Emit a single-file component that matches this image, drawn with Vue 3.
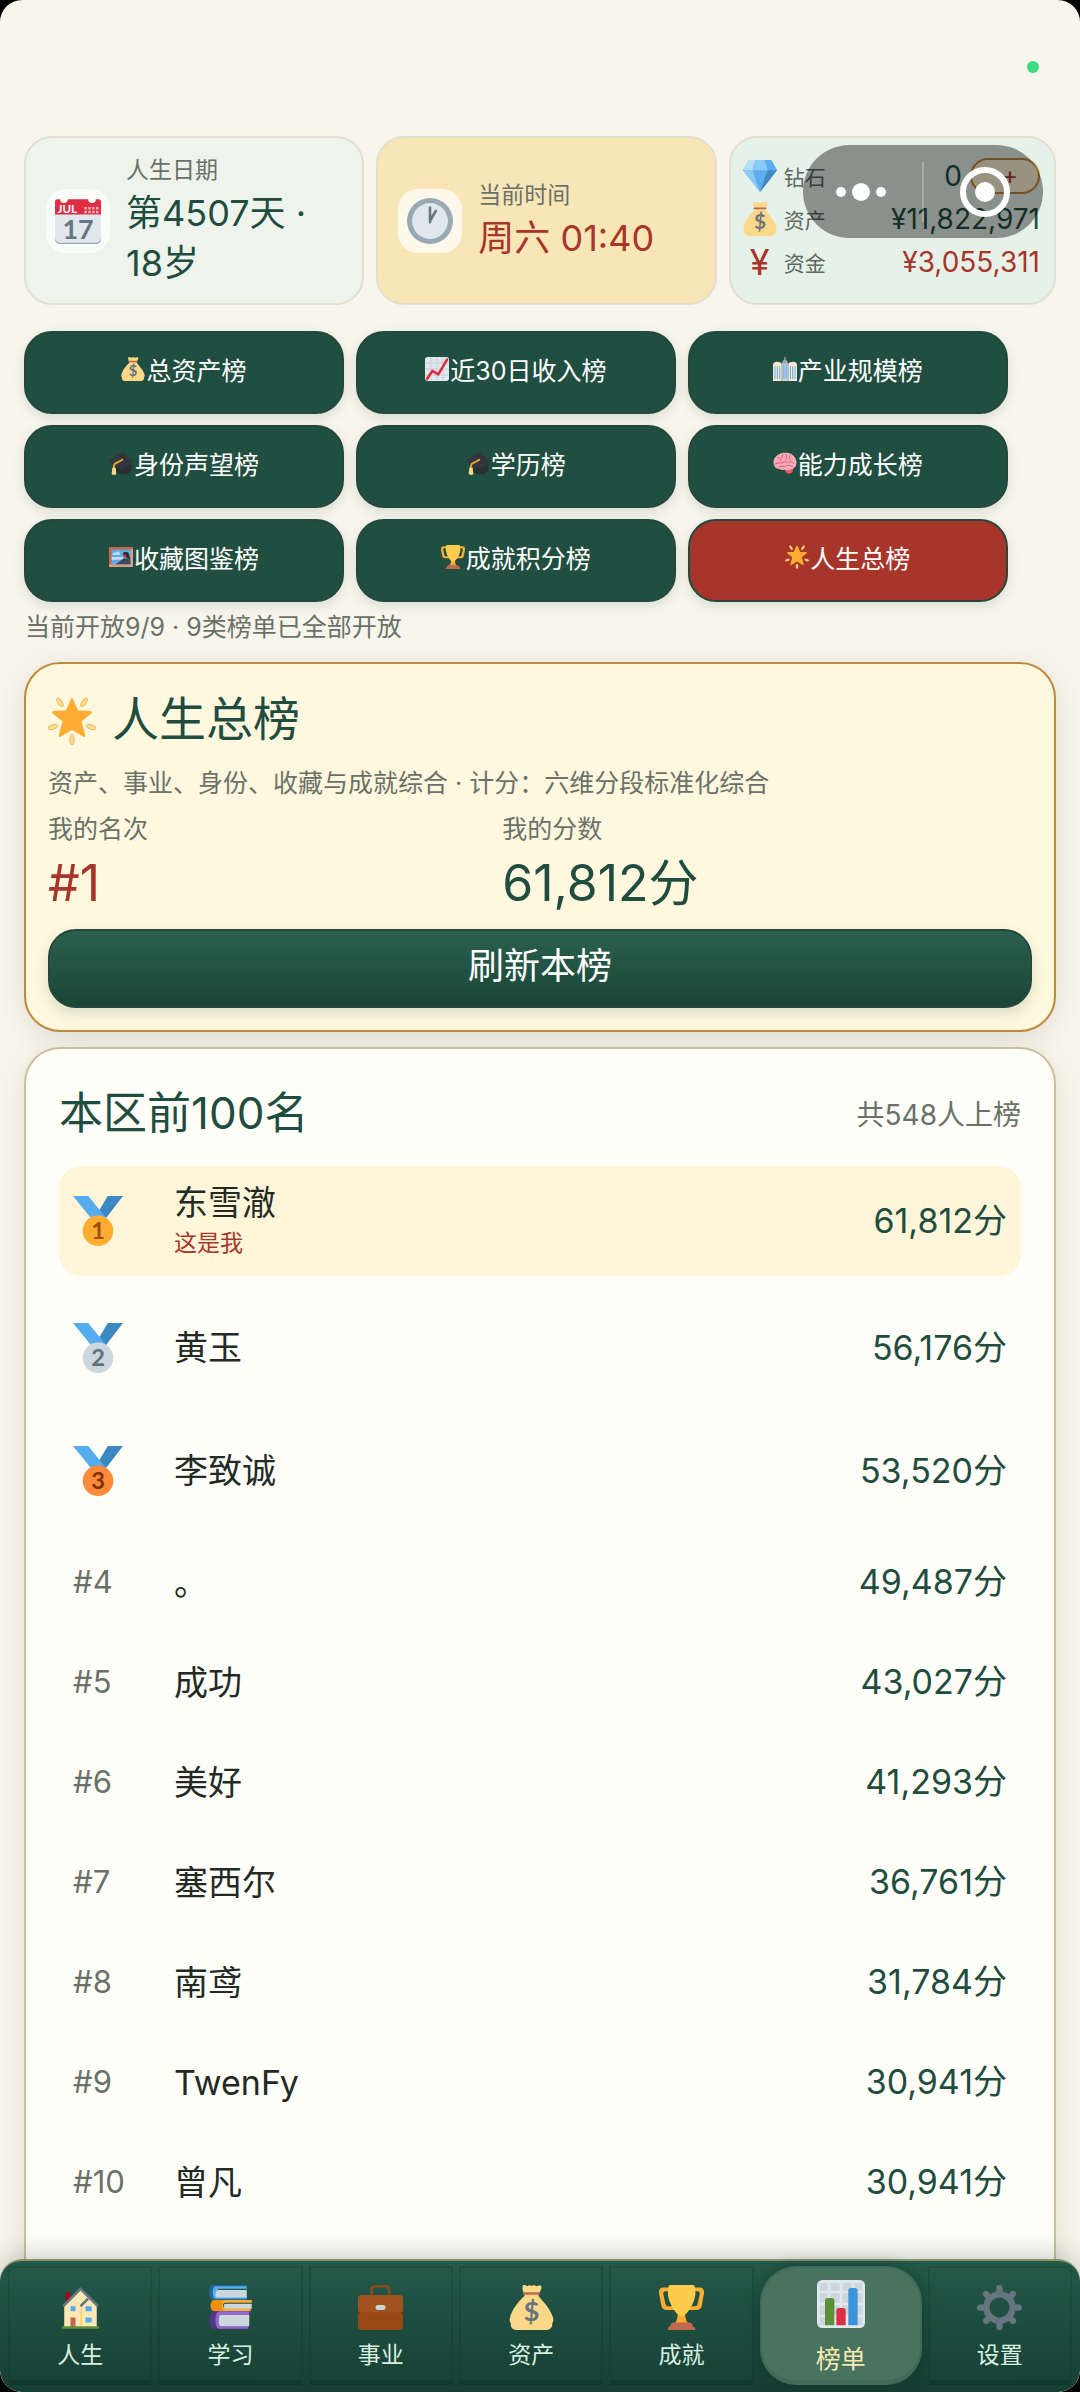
<script setup>
import { ref, computed } from 'vue'

const boards = [
  { name: '总资产榜', icon: 'bag' },
  { name: '近30日收入榜', icon: 'trend' },
  { name: '产业规模榜', icon: 'building' },
  { name: '身份声望榜', icon: 'cap' },
  { name: '学历榜', icon: 'cap' },
  { name: '能力成长榜', icon: 'brain' },
  { name: '收藏图鉴榜', icon: 'picture' },
  { name: '成就积分榜', icon: 'trophy' },
  { name: '人生总榜', icon: 'star' },
]

const players = [
  { name: '东雪澈', score: 61812, me: true },
  { name: '黄玉', score: 56176 },
  { name: '李致诚', score: 53520 },
  { name: '。', score: 49487 },
  { name: '成功', score: 43027 },
  { name: '美好', score: 41293 },
  { name: '塞西尔', score: 36761 },
  { name: '南鸢', score: 31784 },
  { name: 'TwenFy', score: 30941 },
  { name: '曾凡', score: 30941 },
]

const tabs = [
  { name: '人生', icon: 'house' },
  { name: '学习', icon: 'books' },
  { name: '事业', icon: 'briefcase' },
  { name: '资产', icon: 'bag' },
  { name: '成就', icon: 'trophy' },
  { name: '榜单', icon: 'bars' },
  { name: '设置', icon: 'gear' },
]

// gold, silver, bronze
const medals = [
  { fill: '#ffac33', text: '#9e5200' },
  { fill: '#ccd6dd', text: '#627077' },
  { fill: '#ff8a3b', text: '#7c3300' },
]

const activeBoard = ref('人生总榜')
const activeTab = ref('榜单')

const myIndex = computed(() => players.findIndex((p) => p.me))
const myScore = computed(() => players[myIndex.value].score)

function fmt(n) {
  return n.toLocaleString('en-US')
}
</script>

<template>
  <div class="page">
    <!-- shared icon shapes -->
    <svg class="defs" aria-hidden="true">
      <symbol id="i-gem" viewBox="0 0 36 36">
        <path fill="#5dadec" d="M0 12 6 1h24l6 11-18 23z" />
        <path fill="#bdddf4" d="M0 12 6 1h7l-3 11z" />
        <path fill="#8ccaf7" d="M13 1h10l3 11H10z" />
        <path fill="#5dadec" d="M23 1h7l6 11H26z" />
        <path fill="#4289c1" d="M26 12h10L18 35z" />
        <path fill="#8ccaf7" d="M0 12h10l8 23z" />
      </symbol>
      <symbol id="i-bag" viewBox="0 0 36 36">
        <path fill="#fdd888" d="M11 1c0-2 2-1 3.500 0C16 0 17 0 18 .700 19.500 0 20.500 0 22 1c1.500-1 4-1 4 .500 0 2-1 3.500-2 5l-.500 2c2 3 9 9 11.500 17 .500 1.500 1 3-.500 5.500.500 3-2 5-5 5H6c-3 0-5-2-4.500-5C0 28.500.500 27 1 25.500c0-1.500.500-2 1-3C4 17 9.500 11.500 12.500 8.500l-.500-2C11 5 10.500 3 11 1z" />
        <path d="M12 6.700h12" stroke="#bf6952" stroke-width="2" stroke-linecap="round" />
      </symbol>
      <symbol id="i-trend" viewBox="0 0 36 36">
        <rect width="36" height="36" rx="4" fill="#e1e8ed" />
        <path d="M9 1v34M18 1v34M27 1v34M1 9h34M1 18h34M1 27h34" stroke="#ccd6dd" stroke-width="2" />
        <path d="m3 33 8-12 9 5L33 4" fill="none" stroke="#dd2e44" stroke-width="4" stroke-linecap="round" stroke-linejoin="round" />
      </symbol>
      <symbol id="i-building" viewBox="0 0 36 36">
        <path fill="#99aab5" d="M16 4h1V0h2v4h1l3 5v27H13V9z" />
        <path fill="#ccd6dd" d="M14 10h8v26h-8z" />
        <path fill="#ffe8cf" d="M0 12c0-4 3-5 6-5s6 1 7 3v26H0zM36 12c0-4-3-5-6-5s-6 1-7 3v26h13z" />
        <path d="M3 14v19M6.500 14v19M10 14v19M26 14v19M29.500 14v19M33 14v19" stroke="#55acee" stroke-width="1.500" />
        <path d="M15.500 11v22M18 11v22M20.500 11v22" stroke="#55acee" stroke-width="1.200" />
      </symbol>
      <symbol id="i-cap" viewBox="0 0 36 36">
        <path fill="#292f33" d="M10 16c8-3 18-3 23 2 2 6 1 12-3 15-6 4-13 2-19-1z" />
        <path fill="#31373d" d="M18 2c1-1 2-1 3 0l14 13c1 1 1 2-1 3L21 27c-2 1-3 1-5 0L1 17c-1-1-1-2 0-3z" />
        <path d="M20 13 9 19c-2 2-2 6-2 9" fill="none" stroke="#ffac33" stroke-width="2.500" stroke-linecap="round" />
        <path fill="#ffd983" d="M5 25h5l1 10-3 1-4-1z" />
      </symbol>
      <symbol id="i-brain" viewBox="0 0 36 36">
        <path fill="#ea596e" d="M18 28c5-2 12-3 12-3s1 8-5 9c-4 0-7-2-7-6z" />
        <path fill="#f4abba" d="M1 19C0 13 3 9 7 6c5-4 11-4 16-3 6 1 11 6 12 12 1 5-1 9-4 11-5 3-9 3-14 2-3 1-5 1-7-1-5 0-8-3-9-8z" />
        <path d="M7 10c3 0 5 2 5 4M14 5c1 3 0 5-2 6M20 5c0 3 1 5-1 8M26 7c-2 2-2 4 1 7M4 19c4-3 8 1 11-2 4-3 6 1 9 0s5-1 7 2M9 24c4-3 7 1 11-2 3-1 6 0 9 1" fill="none" stroke="#ea596e" stroke-width="1.500" stroke-linecap="round" />
      </symbol>
      <symbol id="i-picture" viewBox="0 0 36 36">
        <path fill="#c1694f" d="M0 3h36v30H0z" />
        <path fill="#d99e82" d="M0 29h32V6h4v27H0z" />
        <path fill="#5dadec" d="M4 7h28v22H4z" />
        <path fill="#bdddf4" d="M4 18h18v4H4zM5 15c1-4 4-3 5-4 3-3 7 0 7 4z" />
        <path fill="#3b4a58" d="m10 29 12-9 10 1v8z" />
        <circle cx="25" cy="15" r="4" fill="#dd2e44" />
        <path fill="#292f33" d="M21 14c0-5 8-5 9 0l2 7-6-1c2-3 0-5-5-6z" />
      </symbol>
      <symbol id="i-trophy" viewBox="0 0 36 36">
        <path fill="#ffac33" d="M5.123 5h6C12.227 5 13 4.896 13 6V4c0-1.104-.773-2-1.877-2h-8c-2 0-3.583 2.125-3 5 0 0 1.791 9.375 1.917 9.958C2.373 18.500 4.164 20 6.081 20h6.958c1.105 0-.039-1.896-.039-3v-2c0 1.104-.773 2-1.877 2h-4c-1.104 0-1.833-1.042-2-2S3.539 7.667 3.539 7.667C3.206 5.750 4.018 5 5.123 5zm25.812 0h-6C23.831 5 22 4.896 22 6V4c0-1.104 1.831-2 2.935-2h8c2 0 3.584 2.125 3 5 0 0-1.633 9.419-1.771 10-.354 1.500-2.042 3-4 3h-7.146C21.914 20 22 18.104 22 17v-2c0 1.104 1.831 2 2.935 2h4c1.104 0 1.834-1.042 2-2s1.584-7.333 1.584-7.333C32.851 5.750 32.040 5 30.935 5z" />
        <path fill="#ffac33" d="M20.832 22c0-6.958-2.709 0-2.709 0s-3-6.958-3 0-3.291 10-3.291 10h12.292s-3.292-3.042-3.292-10z" />
        <path fill="#ffcc4d" d="M29.123 6.577c0 6.775-6.770 18.423-11 18.423-4.231 0-11-11.649-11-18.423C7.123 1 8.123 0 9.123 0h18c1.042 0 2 1 2 6.577z" />
        <path fill="#c1694f" d="M27 33c0-1.500-1-3-3-3H12c-2 0-3 1.500-3 3-1 0-2 1-2 3h22c0-2-1-3-2-3z" />
      </symbol>
      <symbol id="i-star" viewBox="0 0 36 36">
        <path fill="#ffac33" stroke="#ffac33" stroke-width="2" stroke-linejoin="round" d="m18 2 4 9 10 .500-8 6.500 3 11-9-5.500L9 29l3-11-8-6.500L14 11z" />
        <g fill="#ffd983" stroke="#dfa95f" stroke-width=".500">
          <ellipse cx="9" cy="4" rx="1.700" ry="3.700" transform="rotate(-33 9 4)" />
          <ellipse cx="27" cy="4" rx="1.700" ry="3.700" transform="rotate(33 27 4)" />
          <ellipse cx="3.700" cy="22.500" rx="3.700" ry="1.700" transform="rotate(-17 3.700 22.500)" />
          <ellipse cx="32.300" cy="22.500" rx="3.700" ry="1.700" transform="rotate(17 32.300 22.500)" />
          <ellipse cx="18" cy="32" rx="1.700" ry="3.800" />
        </g>
      </symbol>
      <symbol id="i-house" viewBox="0 0 36 36">
        <path fill="#a0041e" d="M6 6h4v7H6z" />
        <path fill="#ffe8b6" d="M18 4 5 17v17h26V17z" />
        <path fill="#ffcc4d" d="M18 19h1v15h-1z" />
        <path d="m4 17 14-14 14 14M24 11l-6 6" fill="none" stroke="#66757f" stroke-width="2" />
        <path fill="#55acee" d="M10 17h4v4h-4zM22 17h5v4h-5zM22 26h5v4h-5z" />
        <path fill="#c1694f" d="M10 26h4v8h-4z" />
        <path fill="#5c913b" d="M3 33h30v2H3z" />
      </symbol>
      <symbol id="i-books" viewBox="0 0 36 36">
        <path fill="#226699" d="M4 0h27v2H6v8h25v2H4c-4 0-4-12 0-12z" />
        <path fill="#55acee" d="M6 1h25v2H8v6h23v2H6c-3 0-3-10 0-10z" />
        <path fill="#ccd6dd" d="M8 4h23v6H7c-2 0-1-6 1-6z" />
        <path fill="#f4900c" d="M5 12h30v2H12v4h22v3H5c-4 0-4-9 0-9z" />
        <path fill="#ffac33" d="M14 12h21v2H14c-3 1-3 4 0 5h20v2H14c-4 0-4-9 0-9z" />
        <path fill="#ccd6dd" d="M14 15h21v4H14c-2 0-2-4 0-4z" />
        <path fill="#553788" d="M5 21h28v3H9v9h24v2H5c-5 0-5-14 0-14z" />
        <path fill="#9266cc" d="M9 21h24v3H10c-2 1-2 8 0 9h22v2H9c-4 0-4-14 0-14z" />
        <path fill="#ccd6dd" d="M10 24h23v9H10c-2 0-2-9 0-9z" />
      </symbol>
      <symbol id="i-briefcase" viewBox="0 0 36 36">
        <path d="M11 9V4c0-2 1-3 3-3h8c2 0 3 1 3 3v5" fill="none" stroke="#8a4b20" stroke-width="2" />
        <rect y="8" width="36" height="28" rx="3" fill="#974914" />
        <path fill="#662113" d="M0 19c0 4 1 4 4 4h28c3 0 4 0 4-4v4H0z" />
        <path fill="#a0521f" d="M3 8h30a3 3 0 0 1 3 3v7c0 3-1 4-4 4H4c-3 0-4-1-4-4v-7a3 3 0 0 1 3-3z" />
        <rect x="14" y="16" width="8" height="4" rx="2" fill="#ccd6dd" />
      </symbol>
      <symbol id="i-bars" viewBox="0 0 36 36">
        <rect width="36" height="36" rx="4" fill="#e1e8ed" />
        <path fill="#ccd6dd" d="M2 2h6v6H2zM10 2h7v6h-7zM19 2h7v6h-7zM28 2h6v6h-6zM2 10h6v7H2zM10 10h7v7h-7zM19 10h7v7h-7zM28 10h6v7h-6zM2 19h6v7H2zM10 19h7v7h-7zM19 19h7v7h-7zM28 19h6v7h-6zM2 28h6v6H2zM28 28h6v6h-6z" />
        <path fill="#5c913b" d="M6 34V15.500a2 2 0 0 1 2-2h3a2 2 0 0 1 2 2V34z" />
        <path fill="#dd2e44" d="M14.500 34V23a2 2 0 0 1 2-2h3a2 2 0 0 1 2 2v11z" />
        <path fill="#3b94d9" d="M23.500 34V8a2 2 0 0 1 2-2h3a2 2 0 0 1 2 2v26z" />
      </symbol>
      <symbol id="i-gear" viewBox="0 0 36 36">
        <circle cx="18" cy="18" r="10.500" fill="none" stroke="#66757f" stroke-width="5" />
        <g stroke="#66757f" stroke-width="5" stroke-linecap="round">
          <path d="M18 7V2.500M18 29v4.500M7 18H2.500M29 18h4.500" />
          <path d="m10 10-2.800-2.800M26 26l2.800 2.800M26 10l2.800-2.800M10 26l-2.800 2.800" />
        </g>
      </symbol>
    </svg>

    <main class="content">
      <header class="status">
        <section class="stat stat-date">
          <span class="tile">
            <svg viewBox="0 0 36 36">
              <path fill="#e1e8ed" d="M0 12h36v20a4 4 0 0 1-4 4H4a4 4 0 0 1-4-4z" />
              <path fill="#99aab5" d="M0 31a4 4 0 0 0 4 5h28a4 4 0 0 0 4-5 4 4 0 0 1-4 4H4a4 4 0 0 1-4-4z" />
              <path fill="#dd2e44" d="M2 1h2a3 3 0 0 0 6 0h16a3 3 0 0 0 6 0h2a2 2 0 0 1 2 2v10H0V3a2 2 0 0 1 2-2z" />
              <path fill="#f4abba" d="M23 7h2v2h-2zM26 7h2v2h-2zM29 7h2v2h-2zM32 7h2v2h-2zM23 10h2v2h-2zM26 10h2v2h-2zM29 10h2v2h-2zM32 10h2v2h-2z" />
              <text class="cal-month" x="2" y="12">JUL</text>
              <text class="cal-day" x="18" y="32">17</text>
            </svg>
          </span>
          <div class="stat-body">
            <p class="stat-label">人生日期</p>
            <p class="stat-value">第4507天 · 18岁</p>
          </div>
        </section>
        <section class="stat stat-time">
          <span class="tile">
            <svg viewBox="0 0 36 36">
              <circle cx="18" cy="18" r="18" fill="#99aab5" />
              <circle cx="18" cy="18" r="14" fill="#e1e8ed" />
              <path d="M18 19V7.500M18 18l4.500-8" stroke="#66757f" stroke-width="2" stroke-linecap="round" />
            </svg>
          </span>
          <div class="stat-body">
            <p class="stat-label">当前时间</p>
            <p class="stat-value red">周六 01:40</p>
          </div>
        </section>
        <section class="stat stat-money">
          <div class="money-row">
            <svg class="money-icon" viewBox="0 0 36 36"><use href="#i-gem" /></svg>
            <span class="money-label">钻石</span>
            <span class="money-value">0</span>
            <button class="add" type="button">+</button>
          </div>
          <div class="money-row">
            <svg class="money-icon" viewBox="0 0 36 36">
              <use href="#i-bag" />
              <text class="dollar" x="18" y="29">$</text>
            </svg>
            <span class="money-label">资产</span>
            <span class="money-value">¥11,822,971</span>
          </div>
          <div class="money-row">
            <span class="money-icon yen">¥</span>
            <span class="money-label">资金</span>
            <span class="money-value red">¥3,055,311</span>
          </div>
        </section>
      </header>

      <div class="boards">
        <button
          v-for="b in boards"
          :key="b.name"
          type="button"
          class="board"
          :class="{ active: b.name === activeBoard }"
          @click="activeBoard = b.name"
        >
          <svg class="board-icon" viewBox="0 0 36 36">
            <use :href="'#i-' + b.icon" />
            <text v-if="b.icon === 'bag'" class="dollar" x="18" y="29">$</text>
          </svg>
          <span>{{ b.name }}</span>
        </button>
      </div>
      <p class="hint">当前开放9/9 · 9类榜单已全部开放</p>

      <section class="hero">
        <h1 class="hero-title">
          <svg class="hero-icon" viewBox="0 0 36 36"><use href="#i-star" /></svg>
          <span>人生总榜</span>
        </h1>
        <p class="hero-text">资产、事业、身份、收藏与成就综合 · 计分：六维分段标准化综合</p>
        <div class="mine">
          <div>
            <p class="hero-text">我的名次</p>
            <p class="mine-value red">#{{ myIndex + 1 }}</p>
          </div>
          <div>
            <p class="hero-text">我的分数</p>
            <p class="mine-value">{{ fmt(myScore) }}分</p>
          </div>
        </div>
        <button class="refresh" type="button">刷新本榜</button>
      </section>

      <section class="ranking">
        <div class="ranking-head">
          <h2>本区前100名</h2>
          <span>共548人上榜</span>
        </div>
        <ol class="rows">
          <li v-for="(p, i) in players" :key="p.name" class="row" :class="{ top: i < 3, me: p.me }">
            <svg v-if="i < 3" class="medal" viewBox="0 0 36 36">
              <path fill="#3b88c3" d="M25 0h11L23 17h-8z" />
              <path fill="#55acee" d="M0 0h11l13 16H13z" />
              <circle cx="18" cy="25" r="11" :fill="medals[i].fill" />
              <text class="medal-text" x="18" y="31" :fill="medals[i].text">{{ i + 1 }}</text>
            </svg>
            <span v-else class="rank">#{{ i + 1 }}</span>
            <span class="who">
              {{ p.name }}
              <small v-if="p.me">这是我</small>
            </span>
            <span class="score">{{ fmt(p.score) }}分</span>
          </li>
        </ol>
      </section>
    </main>

    <nav class="tabbar">
      <button
        v-for="t in tabs"
        :key="t.name"
        type="button"
        class="tab"
        :class="{ active: t.name === activeTab }"
        @click="activeTab = t.name"
      >
        <svg class="tab-icon" viewBox="0 0 36 36">
          <use :href="'#i-' + t.icon" />
          <text v-if="t.icon === 'bag'" class="dollar" x="18" y="29">$</text>
        </svg>
        <span>{{ t.name }}</span>
      </button>
    </nav>

    <span class="live-dot"></span>
    <div class="capsule">
      <button type="button" aria-label="更多">
        <svg class="dots" viewBox="0 0 50 20">
          <circle cx="5" cy="10" r="5" />
          <circle cx="25" cy="10" r="9" />
          <circle cx="45" cy="10" r="5" />
        </svg>
      </button>
      <button type="button" aria-label="关闭">
        <svg class="target" viewBox="0 0 50 50">
          <circle cx="25" cy="25" r="22" fill="none" stroke="#fff" stroke-width="6" />
          <circle cx="25" cy="25" r="10" />
        </svg>
      </button>
    </div>
  </div>
</template>

<style>
body {
  margin: 0;
  background: #000;
}
</style>

<style scoped>
.page {
  position: relative;
  display: flex;
  flex-direction: column;
  height: 100vh;
  overflow: hidden;
  border-radius: 22px;
  background: #f8f5ec;
  color: #1f4d3f;
  font-family: Inter, "Noto Sans CJK SC", sans-serif;
  font-weight: 400;
}

.defs {
  position: absolute;
  width: 0;
  height: 0;
}

p,
h1,
h2,
ol {
  margin: 0;
  padding: 0;
  font-weight: inherit;
}

button {
  margin: 0;
  padding: 0;
  font: inherit;
  cursor: pointer;
}

.red {
  color: #a8352a;
}

.dollar,
.cal-month,
.cal-day,
.medal-text {
  font-family: Lato, sans-serif;
  font-weight: 700;
}

.dollar {
  fill: #67757f;
  font-size: 22px;
  text-anchor: middle;
}

.cal-month {
  fill: #fff;
  font-size: 9px;
}

.cal-day {
  fill: #66757f;
  font-size: 21px;
  text-anchor: middle;
}

.medal-text {
  font-size: 17px;
  text-anchor: middle;
}

.content {
  flex: 1;
  min-height: 0;
  display: flex;
  flex-direction: column;
  box-sizing: border-box;
  padding: 136px 24px 0;
  overflow-y: auto;
  scrollbar-width: none;
}

/* status cards */
.status {
  display: grid;
  grid-template-columns: 26fr 26fr 25fr;
  gap: 12px;
}

.stat {
  display: flex;
  align-items: center;
  gap: 16px;
  box-sizing: border-box;
  min-height: 169px;
  padding: 8px 20px;
  border: 2px solid #e2dfcf;
  border-radius: 28px;
}

.stat-date {
  background: #eef4ec;
}

.stat-time {
  background: #f9e6b7;
}

.stat-money {
  flex-direction: column;
  align-items: stretch;
  justify-content: center;
  gap: 0;
  padding: 0 14px 4px 12px;
  background: #e6f2e9;
}

.tile {
  flex: none;
  display: grid;
  place-items: center;
  width: 64px;
  height: 64px;
  border-radius: 20px;
  background: rgba(255, 255, 255, 0.7);
}

.tile svg {
  width: 46px;
  height: 46px;
}

.stat-body {
  padding-bottom: 2px;
}

.stat-label {
  color: #6a7169;
  font-size: 23px;
  line-height: 36px;
}

.stat-value {
  font-size: 36px;
  line-height: 50px;
}

.money-row {
  display: flex;
  align-items: center;
  height: 43px;
}

.money-icon {
  width: 34px;
  height: 36px;
  margin-right: 7px;
}

.yen {
  color: #a8352a;
  font-size: 36px;
  line-height: 36px;
  text-align: center;
}

.money-label {
  color: #5d675f;
  font-size: 21px;
}

.money-value {
  margin-left: auto;
  font-size: 28px;
}

.add {
  box-sizing: border-box;
  width: 70px;
  height: 36px;
  margin-left: 8px;
  padding-left: 10px;
  border: 2px solid #c08a3e;
  border-radius: 18px;
  background: #fff3d6;
  color: #a8352a;
  font-size: 24px;
  line-height: 30px;
}

/* board switcher */
.boards {
  display: flex;
  flex-wrap: wrap;
  gap: 11px 12px;
  margin-top: 26px;
}

.board {
  display: flex;
  align-items: center;
  justify-content: center;
  gap: 1px;
  box-sizing: border-box;
  width: 31%;
  height: 83px;
  padding-bottom: 8px;
  border: 2px solid #24483c;
  border-radius: 28px;
  background: #204e40;
  box-shadow: 0 4px 12px rgba(31, 77, 63, 0.14);
  color: #fff;
  font-size: 25px;
}

.board.active {
  background: #a8352a;
}

.board-icon {
  width: 24px;
  height: 24px;
}

.hint {
  margin: 7px 0 17px 1px;
  color: #6a7169;
  font-size: 25px;
  line-height: 36px;
}

/* current board summary */
.hero {
  flex: none;
  padding: 29px 22px 22px;
  border: 2px solid #c08a3e;
  border-radius: 36px;
  background: #fff8df;
  box-shadow: 0 6px 28px rgba(60, 60, 40, 0.12);
}

.hero-title {
  display: flex;
  align-items: center;
  gap: 16px;
  height: 56px;
  font-size: 47px;
  line-height: 56px;
}

.hero-title span {
  padding-bottom: 4px;
}

.hero-icon {
  width: 48px;
  height: 48px;
}

.hero-text {
  color: #6a7169;
  font-size: 25px;
  line-height: 36px;
}

.hero-title + .hero-text {
  margin-top: 16px;
}

.mine {
  display: grid;
  grid-template-columns: 6fr 7fr;
  margin-top: 10px;
}

.mine-value {
  font-size: 50px;
  line-height: 72px;
}

.refresh {
  display: block;
  width: 100%;
  height: 79px;
  margin-top: 10px;
  padding-bottom: 12px;
  border: 2px solid #24483c;
  border-radius: 28px;
  background: linear-gradient(#2a604e, #1a4538);
  box-shadow: 0 6px 14px rgba(31, 77, 63, 0.16);
  color: #fff;
  font-size: 36px;
}

/* ranking list */
.ranking {
  flex: 1 0 auto;
  margin-top: 15px;
  padding: 35px 33px 60px;
  border: 2px solid #cabfa3;
  border-bottom: 0;
  border-radius: 36px 36px 0 0;
  background: #fffef9;
  box-shadow: 0 6px 28px rgba(90, 70, 20, 0.12);
}

.ranking-head {
  display: flex;
  align-items: center;
  justify-content: space-between;
  margin-bottom: 24px;
}

.ranking-head h2 {
  font-size: 44px;
  line-height: 58px;
}

.ranking-head span {
  color: #6a7169;
  font-size: 28px;
}

.rows {
  display: flex;
  flex-direction: column;
  gap: 21px;
  list-style: none;
}

.row {
  display: flex;
  align-items: center;
  box-sizing: border-box;
  min-height: 79px;
  padding: 0 14px;
  border-radius: 22px;
}

.row.top {
  min-height: 102px;
}

.row.me {
  min-height: 110px;
  background: #fff5d9;
}

.rank {
  flex: none;
  width: 101px;
  padding-bottom: 2px;
  color: #6a7169;
  font-size: 31px;
}

.medal {
  width: 50px;
  height: 52px;
  margin-right: 51px;
}

.who {
  display: flex;
  flex-direction: column;
  color: #222a25;
  font-size: 34px;
  line-height: 44px;
}

.who small {
  color: #a8352a;
  font-size: 23px;
  line-height: 36px;
}

.score {
  margin-left: auto;
  padding-bottom: 6px;
  font-size: 34px;
}

/* bottom tabs */
.tabbar {
  position: relative;
  flex: none;
  display: flex;
  gap: 6px;
  margin-top: -22px;
  padding: 5px 8px 7px;
  border-top: 2px solid #8c9468;
  border-radius: 22px;
  background: linear-gradient(#245a49, #163f34);
  box-shadow: 0 -6px 24px rgba(31, 60, 50, 0.22);
}

.tab {
  flex: 8 1 0;
  display: flex;
  flex-direction: column;
  align-items: center;
  gap: 9px;
  box-sizing: border-box;
  height: 119px;
  padding-top: 17px;
  border: 2px solid rgba(18, 58, 46, 0.3);
  border-bottom: 5px solid rgba(12, 44, 36, 0.4);
  background: transparent;
  color: #d9efe0;
  font-size: 23px;
  line-height: 32px;
}

.tab.active {
  flex-grow: 9;
  gap: 15px;
  padding-top: 12px;
  border-color: #406a57;
  border-radius: 36px;
  background: #48735e;
  box-shadow: 0 0 14px rgba(10, 40, 32, 0.5);
  color: #f6e9b4;
  font-size: 25px;
}

.tab-icon {
  width: 45px;
  height: 45px;
}

.tab.active .tab-icon {
  width: 48px;
  height: 48px;
}

/* floating system controls */
.live-dot {
  position: absolute;
  top: 61px;
  right: 41px;
  width: 12px;
  height: 12px;
  border-radius: 50%;
  background: #3ddc84;
}

.capsule {
  position: absolute;
  top: 145px;
  right: 37px;
  display: flex;
  align-items: center;
  justify-content: space-between;
  box-sizing: border-box;
  width: 240px;
  height: 93px;
  padding: 0 33px;
  border-radius: 47px;
  background: rgba(0, 0, 0, 0.4);
}

.capsule button {
  display: grid;
  place-items: center;
  border: 0;
  background: none;
}

.capsule::before {
  content: "";
  position: absolute;
  left: 119px;
  width: 2px;
  height: 60px;
  background: rgba(255, 255, 255, 0.25);
}

.capsule svg {
  fill: #fff;
}

.dots {
  width: 50px;
  height: 20px;
}

.target {
  width: 50px;
  height: 50px;
}
</style>
